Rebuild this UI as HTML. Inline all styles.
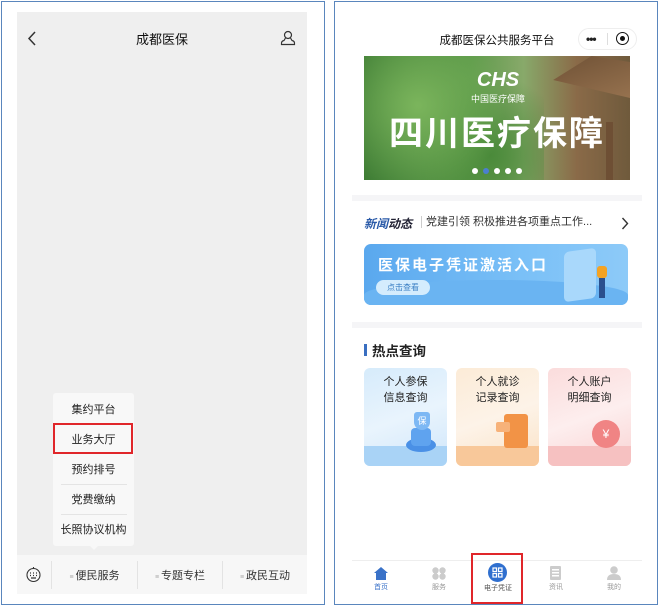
<!DOCTYPE html>
<html><head><meta charset="utf-8"><style>
*{margin:0;padding:0;box-sizing:border-box}
body{width:660px;height:606px;background:#fff;position:relative;overflow:hidden;font-family:"Liberation Sans","Noto Sans CJK SC",sans-serif;color:#222}
.a{position:absolute}
.panel{position:absolute;border:1px solid #5a86bd}
.c{text-align:center;white-space:nowrap}
</style></head><body>
<!-- LEFT -->
<div class="panel" style="left:1px;top:1px;width:324px;height:604px"></div>
<div class="a" style="left:17px;top:12px;width:290px;height:582px;background:#efefef"></div>
<svg class="a" style="left:27px;top:31px" width="10" height="15"><path d="M8 1 L2 7.5 L8 14" stroke="#333" stroke-width="1.5" fill="none"/></svg>
<div class="a c" style="left:112px;top:29px;width:100px;font-size:13px;color:#111">成都医保</div>
<svg class="a" style="left:280px;top:30px" width="16" height="16" fill="none" stroke="#333" stroke-width="1.2"><circle cx="8" cy="5" r="3.5"/><path d="M5.5 8 L4 10.5 Q1 11 1.5 14.5 L14.5 14.5 Q15 11 12 10.5 L10.5 8"/></svg>
<div class="a" style="left:53px;top:393px;width:81px;height:153px;background:#f8f8f8;border-radius:3px"></div>
<div class="a" style="left:89px;top:545px;width:0;height:0;border-left:5px solid transparent;border-right:5px solid transparent;border-top:5px solid #f8f8f8"></div>
<div class="a" style="left:61px;top:484px;width:66px;height:1px;background:#e4e4e4"></div>
<div class="a" style="left:61px;top:514px;width:66px;height:1px;background:#e4e4e4"></div>
<div class="a c" style="left:53px;top:401px;width:81px;font-size:11px">集约平台</div>
<div class="a c" style="left:53px;top:431px;width:81px;font-size:11px">业务大厅</div>
<div class="a" style="left:53px;top:423px;width:80px;height:31px;border:2px solid #e0262a"></div>
<div class="a c" style="left:53px;top:461px;width:81px;font-size:11px">预约排号</div>
<div class="a c" style="left:53px;top:491px;width:81px;font-size:11px">党费缴纳</div>
<div class="a c" style="left:53px;top:521px;width:81px;font-size:11px">长照协议机构</div>
<div class="a" style="left:17px;top:555px;width:290px;height:39px;background:#f7f7f7"></div>
<svg class="a" style="left:25px;top:566px" width="17" height="17" fill="none" stroke="#333" stroke-width="1.1"><circle cx="8.5" cy="9" r="6.5"/><path d="M8.5 2.5 V1" /><path d="M5 7h1M8 7h1M11 7h1M5 9.5h1M8 9.5h1M11 9.5h1M6 12h5" stroke-width="1.3"/></svg>
<div class="a" style="left:51px;top:561px;width:1px;height:28px;background:#e3e3e3"></div>
<div class="a" style="left:137px;top:561px;width:1px;height:28px;background:#e3e3e3"></div>
<div class="a" style="left:222px;top:561px;width:1px;height:28px;background:#e3e3e3"></div>
<div class="a c" style="left:52px;top:567px;width:85px;font-size:11px;color:#333"><span style="color:#aaa;font-size:7px">≡ </span>便民服务</div>
<div class="a c" style="left:138px;top:567px;width:84px;font-size:11px;color:#333"><span style="color:#aaa;font-size:7px">≡ </span>专题专栏</div>
<div class="a c" style="left:223px;top:567px;width:84px;font-size:11px;color:#333"><span style="color:#aaa;font-size:7px">≡ </span>政民互动</div>

<!-- RIGHT -->
<div class="panel" style="left:334px;top:1px;width:324px;height:604px"></div>
<div class="a c" style="left:430px;top:32px;width:134px;font-size:11.5px;color:#111">成都医保公共服务平台</div>
<div class="a" style="left:578px;top:28px;width:59px;height:22px;border-radius:11px;background:#fff;border:1px solid #eee"></div>
<div class="a" style="left:607px;top:33px;width:1px;height:12px;background:#ddd"></div>
<div class="a" style="left:586px;top:36px;font-size:12px;font-weight:bold;letter-spacing:-1px;line-height:6px">•••</div>
<div class="a" style="left:616px;top:32px;width:13px;height:13px;border-radius:50%;border:1.6px solid #111"></div>
<div class="a" style="left:620px;top:36px;width:5px;height:5px;border-radius:50%;background:#111"></div>
<!-- banner -->
<div class="a" style="left:364px;top:56px;width:266px;height:124px;overflow:hidden;background:linear-gradient(90deg,#3f7d35,#5d9a4a 40%,#88a96a 60%,#8a6a48 80%,#6f5a3c)">
 <div class="a" style="left:0;top:0;width:180px;height:124px;background:radial-gradient(circle at 30% 40%,#7bb55c,transparent 60%),radial-gradient(circle at 70% 80%,#4a8a3a,transparent 50%)"></div>
 <div class="a" style="left:170px;top:0;width:96px;height:60px;background:linear-gradient(160deg,#6b4e33,#a07a55);clip-path:polygon(20% 40%,60% 0,100% 10%,100% 70%)"></div>
 <div class="a" style="left:242px;top:66px;width:7px;height:58px;background:#6e4f34"></div>
 <div class="a c" style="left:96px;top:14px;width:76px;font-size:20px;font-weight:bold;font-style:italic;color:#fff;line-height:20px">CHS</div>
 <div class="a c" style="left:96px;top:36px;width:76px;font-size:9px;color:#fff">中国医疗保障</div>
 <div class="a c" style="left:20px;top:58px;width:226px;font-size:34px;font-weight:bold;color:#fff;letter-spacing:2px;line-height:40px">四川医疗保障</div>
 <div class="a" style="left:108px;top:112px;width:6px;height:6px;border-radius:50%;background:#fff"></div>
 <div class="a" style="left:119px;top:112px;width:6px;height:6px;border-radius:50%;background:#4b7fd0"></div>
 <div class="a" style="left:130px;top:112px;width:6px;height:6px;border-radius:50%;background:#fff"></div>
 <div class="a" style="left:141px;top:112px;width:6px;height:6px;border-radius:50%;background:#fff"></div>
 <div class="a" style="left:152px;top:112px;width:6px;height:6px;border-radius:50%;background:#fff"></div>
</div>
<div class="a" style="left:352px;top:195px;width:290px;height:6px;background:#f5f5f7"></div>
<div class="a" style="left:364px;top:215px;font-size:12px;font-weight:bold;font-style:italic;color:#2a5aa8">新闻<span style="color:#223">动态</span></div>
<div class="a" style="left:421px;top:216px;width:1px;height:12px;background:#ccc"></div>
<div class="a" style="left:426px;top:213px;font-size:11px;color:#333;white-space:nowrap">党建引领 积极推进各项重点工作...</div>
<svg class="a" style="left:621px;top:217px" width="8" height="13"><path d="M1.5 1 L6.5 6.5 L1.5 12" stroke="#333" stroke-width="1.4" fill="none"/></svg>
<div class="a" style="left:364px;top:244px;width:264px;height:61px;border-radius:7px;background:linear-gradient(90deg,#5aa8ee,#7ac0f7 60%,#8dcaf8);overflow:hidden">
 <div class="a" style="left:0;top:36px;width:264px;height:30px;background:#6ab4f2;border-radius:50% 50% 0 0"></div>
 <div class="a" style="left:14px;top:10px;font-size:15px;font-weight:bold;color:#fff;letter-spacing:2px;white-space:nowrap">医保电子凭证激活入口</div>
 <div class="a c" style="left:12px;top:36px;width:54px;height:15px;border-radius:8px;background:#d4ecfd;font-size:8px;color:#3b7fc4;line-height:15px">点击查看</div>
 <div class="a" style="left:200px;top:6px;width:32px;height:50px;border-radius:5px;background:#a9d8fb;transform:skewY(-8deg)"></div>
 <div class="a" style="left:233px;top:22px;width:10px;height:12px;background:#f4a324;border-radius:3px"></div>
 <div class="a" style="left:235px;top:34px;width:6px;height:20px;background:#2a4f8e"></div>
</div>
<div class="a" style="left:352px;top:322px;width:290px;height:6px;background:#f5f5f7"></div>
<div class="a" style="left:364px;top:344px;width:3px;height:12px;background:#3a6fc1"></div>
<div class="a" style="left:372px;top:340px;font-size:13.5px;font-weight:bold;color:#222">热点查询</div>
<!-- cards -->
<div class="a" style="left:364px;top:368px;width:83px;height:98px;border-radius:6px;background:linear-gradient(160deg,#d6ebfb,#e9f4fd 50%,#cfe6fa);overflow:hidden">
 <div class="a c" style="left:0;top:6px;width:83px;font-size:11px;line-height:16px;color:#222">个人参保<br>信息查询</div>
 <div class="a" style="left:0;top:78px;width:83px;height:20px;background:#a9d3f6"></div>
 <div class="a" style="left:42px;top:70px;width:30px;height:14px;border-radius:50%;background:#4a90e6"></div>
 <div class="a" style="left:47px;top:60px;width:20px;height:18px;border-radius:4px;background:#5fa3ef"></div>
 <div class="a c" style="left:50px;top:44px;width:16px;height:18px;border-radius:3px 3px 8px 8px;background:#7db8f4;color:#fff;font-size:9px;line-height:18px">保</div>
</div>
<div class="a" style="left:456px;top:368px;width:83px;height:98px;border-radius:6px;background:linear-gradient(160deg,#fcebd7,#fdf3e8 50%,#fbe2c6);overflow:hidden">
 <div class="a c" style="left:0;top:6px;width:83px;font-size:11px;line-height:16px;color:#222">个人就诊<br>记录查询</div>
 <div class="a" style="left:0;top:78px;width:83px;height:20px;background:#f8c89a"></div>
 <div class="a" style="left:48px;top:46px;width:24px;height:34px;border-radius:3px;background:#f29346"></div>
 <div class="a" style="left:40px;top:54px;width:14px;height:10px;border-radius:2px;background:#f7b27a"></div>
</div>
<div class="a" style="left:548px;top:368px;width:83px;height:98px;border-radius:6px;background:linear-gradient(160deg,#fbdcdc,#fdeeee 50%,#f9d2d2);overflow:hidden">
 <div class="a c" style="left:0;top:6px;width:83px;font-size:11px;line-height:16px;color:#222">个人账户<br>明细查询</div>
 <div class="a" style="left:0;top:78px;width:83px;height:20px;background:#f6c1c1"></div>
 <div class="a c" style="left:44px;top:52px;width:28px;height:28px;border-radius:50%;background:#f08484;color:#fff;font-size:12px;line-height:28px">¥</div>
</div>
<!-- tabbar -->
<div class="a" style="left:352px;top:560px;width:290px;height:1px;background:#eee"></div>
<svg class="a" style="left:374px;top:567px" width="14" height="13"><path d="M7 0 L14 6 H12 V13 H2 V6 H0 Z" fill="#3a72c8"/></svg>
<div class="a c" style="left:361px;top:582px;width:40px;font-size:7px;color:#3a72c8">首页</div>
<svg class="a" style="left:432px;top:567px" width="14" height="13" fill="#ccc"><circle cx="3.5" cy="3.5" r="3.2"/><circle cx="10.5" cy="3.5" r="3.2"/><circle cx="3.5" cy="9.5" r="3.2"/><circle cx="10.5" cy="9.5" r="3.2"/></svg>
<div class="a c" style="left:419px;top:582px;width:40px;font-size:7px;color:#999">服务</div>
<div class="a" style="left:488px;top:563px;width:19px;height:19px;border-radius:50%;background:#2f6fcf"></div>
<svg class="a" style="left:492px;top:567px" width="11" height="11" fill="none" stroke="#fff" stroke-width="1.2"><rect x="1" y="1" width="3.5" height="3.5"/><rect x="6.5" y="1" width="3.5" height="3.5"/><rect x="1" y="6.5" width="3.5" height="3.5"/><rect x="6.5" y="6.5" width="3.5" height="3.5"/></svg>
<div class="a c" style="left:478px;top:583px;width:40px;font-size:7px;color:#555">电子凭证</div>
<div class="a" style="left:471px;top:553px;width:52px;height:51px;border:2px solid #e0262a"></div>
<svg class="a" style="left:550px;top:566px" width="13" height="14" fill="#ccc"><rect x="0" y="0" width="11" height="14" rx="1"/><rect x="2" y="3" width="7" height="1.5" fill="#fff"/><rect x="2" y="6" width="7" height="1.5" fill="#fff"/><rect x="2" y="9" width="7" height="1.5" fill="#fff"/></svg>
<div class="a c" style="left:536px;top:582px;width:40px;font-size:7px;color:#999">资讯</div>
<svg class="a" style="left:607px;top:566px" width="14" height="14" fill="#ccc"><circle cx="7" cy="4" r="3.8"/><path d="M0 14 Q0 8 7 8 Q14 8 14 14Z"/></svg>
<div class="a c" style="left:594px;top:582px;width:40px;font-size:7px;color:#999">我的</div>
</body></html>
